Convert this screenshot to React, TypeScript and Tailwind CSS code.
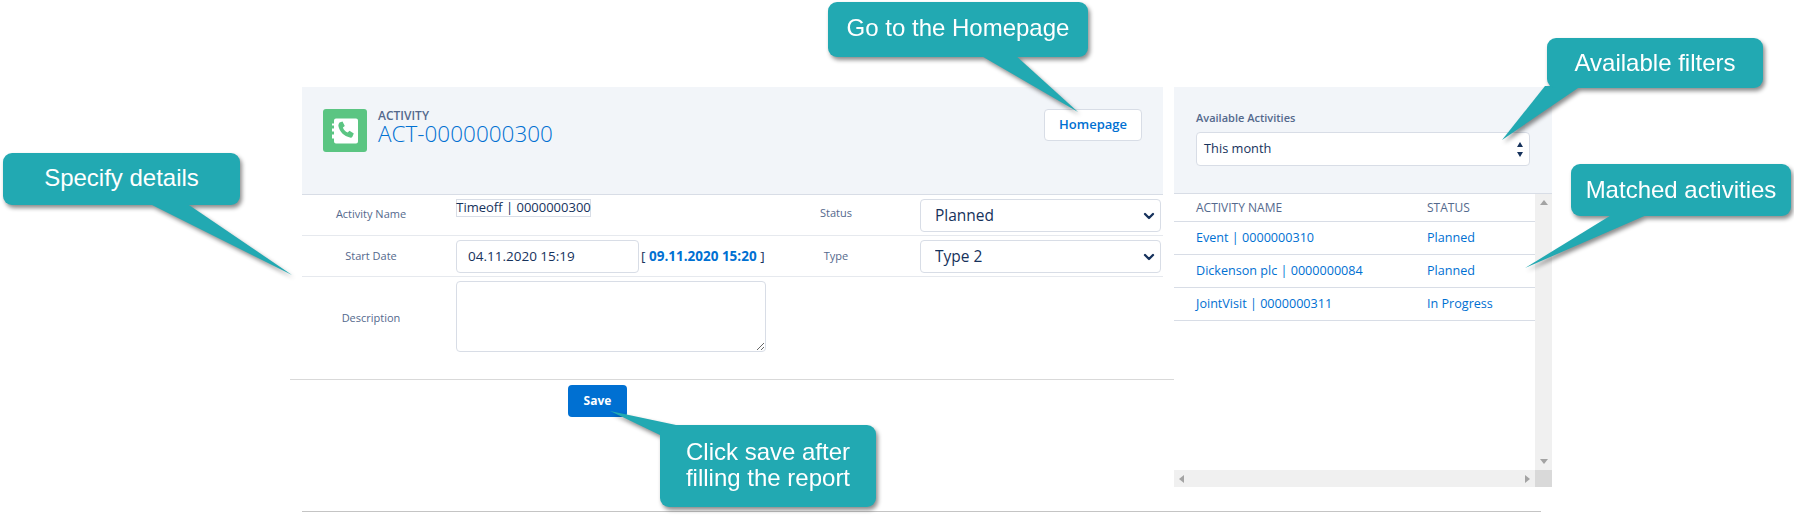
import { ChevronDown } from "lucide-react";
import type { ReactNode } from "react";

const font = "font-['Open_Sans','Liberation_Sans',sans-serif]";

type CalloutProps = {
  box: string;
  tail: string;
  tailBox: string;
  viewBox: string;
  children: ReactNode;
};

// speech bubble that sits over the page, tail is a small svg next to the box
const Callout = ({ box, tail, tailBox, viewBox, children }: CalloutProps) => (
  <div
    className={`absolute z-10 drop-shadow-[2px_3px_2px_rgba(0,0,0,0.45)] ${box}`}
  >
    <svg className={`absolute ${tailBox}`} viewBox={viewBox}>
      <polygon points={tail} fill="#22a9b2" />
    </svg>
    <div className="relative flex h-full w-full items-center justify-center rounded-[9px] bg-[#22a9b2] pb-[3px] text-center font-['Liberation_Sans',sans-serif] text-[24px] leading-[26px] text-white">
      {children}
    </div>
  </div>
);

const Label = ({ children, w }: { children: ReactNode; w: string }) => (
  <div className={`${w} shrink-0 text-center text-[11px] text-[#54698d]`}>
    {children}
  </div>
);

const NativeSelect = ({ value }: { value: string }) => (
  <div className="relative h-[33px] w-[241px]">
    <select
      defaultValue={value}
      className="h-full w-full appearance-none rounded-[4px] border border-[#d8dde6] bg-white pl-[14px] text-[15.5px] text-[#16325c]"
    >
      <option>{value}</option>
    </select>
    <ChevronDown
      className="pointer-events-none absolute right-[4px] top-[9px] text-[#16325c]"
      size={16}
      strokeWidth={3.5}
    />
  </div>
);

const rows = [
  ["Event | 0000000310", "Planned"],
  ["Dickenson plc | 0000000084", "Planned"],
  ["JointVisit | 0000000311", "In Progress"],
];

const Tri = ({ points }: { points: string }) => (
  <svg width="8" height="8" viewBox="0 0 8 8">
    <polygon points={points} fill="#a3a3a3" />
  </svg>
);

export default function App() {
  return (
    <div
      className={`relative h-[522px] w-[1794px] overflow-hidden bg-white ${font}`}
    >
      <div className="flex pl-[302px] pt-[87px]">
        {/* left: activity form */}
        <div className="w-[861px] shrink-0">
          <div className="flex h-[108px] items-start justify-between border-b border-[#d8dde6] bg-[#f2f5f9] pl-[21px] pr-[21px] pt-[22px]">
            <div className="flex gap-[11px]">
              <div className="flex h-[43px] w-[44px] items-center justify-center rounded-[3px] bg-[#5bc582]">
                <svg width="28" height="28" viewBox="0 0 28 28">
                  <path
                    d="M5 1.5h20a2 2 0 0 1 2 2v21a2 2 0 0 1-2 2H5a2 2 0 0 1-2-2v-3H1v-4h2v-3H1v-3h2v-3H1V6.500h2v-3a2 2 0 0 1 2-2z"
                    fill="#fff"
                  />
                  <path
                    d="M8.500 5.500l3-1 2.300 4.400-1.900 1.700c.8 2.400 2.500 4.100 4.800 5l1.800-1.800 4.300 2.600-1.300 3c-.5 1-1.500 1.400-2.600 1.200-5.800-1.300-10.400-5.700-11.500-11.500-.1-1.200.1-2.100 1.100-3.600z"
                    fill="#5bc582"
                  />
                </svg>
              </div>
              <div>
                <div className="text-[12px] font-semibold leading-[14px] text-[#54698d]">
                  ACTIVITY
                </div>
                <div className="text-[22.5px] font-light leading-[22px] text-[#0070d2]">
                  ACT-0000000300
                </div>
              </div>
            </div>
            <button className="h-[32px] w-[98px] rounded-[4px] border border-[#d8dde6] bg-white text-[13px] font-semibold text-[#0070d2]">
              Homepage
            </button>
          </div>

          <div className="flex h-[41px] items-start border-b border-[#e6e9ee]">
            <Label w="w-[138px] pt-[11px]">Activity Name</Label>
            <div className="ml-[16px] mt-[4px] flex h-[18px] w-[135px] items-center justify-center whitespace-nowrap border border-[#d8dde6] text-[13px] text-[#16325c]">
              Timeoff | 0000000300
            </div>
            <Label w="ml-[175px] w-[140px] pt-[10px]">Status</Label>
            <div className="ml-[14px] mt-[4px]">
              <NativeSelect value="Planned" />
            </div>
          </div>

          <div className="flex h-[41px] items-start border-b border-[#e6e9ee]">
            <Label w="w-[138px] pt-[12px]">Start Date</Label>
            <div className="ml-[16px] mt-[4px] flex h-[33px] w-[183px] items-center rounded-[4px] border border-[#d8dde6] pl-[11px] text-[13.500px] text-[#16325c]">
              04.11.2020 15:19
            </div>
            <div className="ml-[2px] w-[125px] whitespace-nowrap pt-[10px] text-[13.500px] text-[#16325c]">
              [ <span className="font-bold text-[#0070d2]">09.11.2020 15:20</span> ]
            </div>
            <Label w="w-[140px] pt-[12px]">Type</Label>
            <div className="ml-[14px] mt-[4px]">
              <NativeSelect value="Type 2" />
            </div>
          </div>

          <div className="flex h-[102px] items-start">
            <Label w="w-[138px] pt-[33px]">Description</Label>
            <textarea className="ml-[16px] mt-[4px] h-[71px] w-[310px] rounded-[4px] border border-[#d8dde6]" />
          </div>

          <div className="-ml-[12px] w-[884px] border-t border-[#d9d9d9] pl-[278px] pt-[5px]">
            <button className="h-[32px] w-[59px] rounded-[4px] bg-[#0070d2] text-[12px] font-bold text-white">
              Save
            </button>
          </div>
        </div>

        {/* right: available activities */}
        <div className="ml-[11px] w-[378px] shrink-0">
          <div className="h-[107px] border-b border-[#d8dde6] bg-[#f2f5f9] pl-[22px] pt-[24px]">
            <div className="text-[11px] font-semibold leading-[14px] text-[#54698d]">
              Available Activities
            </div>
            <div className="mt-[7px] flex h-[34px] w-[334px] items-center justify-between rounded-[4px] border border-[#d8dde6] bg-white pl-[7px] pr-[6px] text-[12.800px] text-[#16325c]">
              This month
              <div className="flex flex-col gap-[5px]">
                <svg width="6" height="5" viewBox="0 0 6 5">
                  <polygon points="3,0 6,5 0,5" fill="#16325c" />
                </svg>
                <svg width="6" height="5" viewBox="0 0 6 5">
                  <polygon points="0,0 6,0 3,5" fill="#16325c" />
                </svg>
              </div>
            </div>
          </div>

          <div className="flex h-[276px]">
            <div className="w-[361px] shrink-0">
              <div className="flex h-[28px] items-center border-b border-[#d8dde6] pl-[22px] text-[12px] text-[#54698d]">
                <div className="w-[231px]">ACTIVITY NAME</div>
                <div>STATUS</div>
              </div>
              {rows.map(([name, status]) => (
                <div
                  key={name}
                  className="flex h-[33px] items-center border-b border-[#d8dde6] pl-[22px] text-[12.600px] text-[#0070d2]"
                >
                  <div className="w-[231px]">{name}</div>
                  <div>{status}</div>
                </div>
              ))}
            </div>
            <div className="flex w-[17px] flex-col items-center justify-between bg-[#f0f0f0] py-[5px]">
              <Tri points="4,1 8,6 0,6" />
              <Tri points="0,2 8,2 4,7" />
            </div>
          </div>
          <div className="flex h-[17px]">
            <div className="flex w-[361px] items-center justify-between bg-[#f0f0f0] px-[4px]">
              <Tri points="6,0 6,8 1,4" />
              <Tri points="2,0 2,8 7,4" />
            </div>
            <div className="w-[17px] bg-[#d9d9d9]" />
          </div>
        </div>
      </div>

      <div className="ml-[302px] mt-[24px] w-[1239px] border-t border-[#c4c4c4]" />

      <Callout
        box="left-[828px] top-[2px] h-[55px] w-[260px]"
        tailBox="left-[150px] top-[50px] h-[60px] w-[102px]"
        viewBox="0 0 102 60"
        tail="0,2 36,2 100,60"
      >
        Go to the Homepage
      </Callout>
      <Callout
        box="left-[1547px] top-[38px] h-[50px] w-[216px]"
        tailBox="left-[-46px] top-[46px] h-[56px] w-[130px]"
        viewBox="0 0 130 56"
        tail="44,2 80,2 1,56"
      >
        <span className="pt-[3px]">Available filters</span>
      </Callout>
      <Callout
        box="left-[1571px] top-[164px] h-[52px] w-[220px]"
        tailBox="left-[-46px] top-[48px] h-[56px] w-[130px]"
        viewBox="0 0 130 56"
        tail="88,2 124,2 0,56"
      >
        <span className="pt-[2px]">Matched activities</span>
      </Callout>
      <Callout
        box="left-[3px] top-[153px] h-[52px] w-[237px]"
        tailBox="left-[145px] top-[48px] h-[74px] w-[146px]"
        viewBox="0 0 146 74"
        tail="0,2 38,2 144,74"
      >
        Specify details
      </Callout>
      <Callout
        box="left-[660px] top-[425px] h-[82px] w-[216px]"
        tailBox="left-[-50px] top-[-16px] h-[30px] w-[70px]"
        viewBox="0 0 70 30"
        tail="0,2 66,16 66,30 50,26"
      >
        <span>
          Click save after
          <br />
          filling the report
        </span>
      </Callout>
    </div>
  );
}
